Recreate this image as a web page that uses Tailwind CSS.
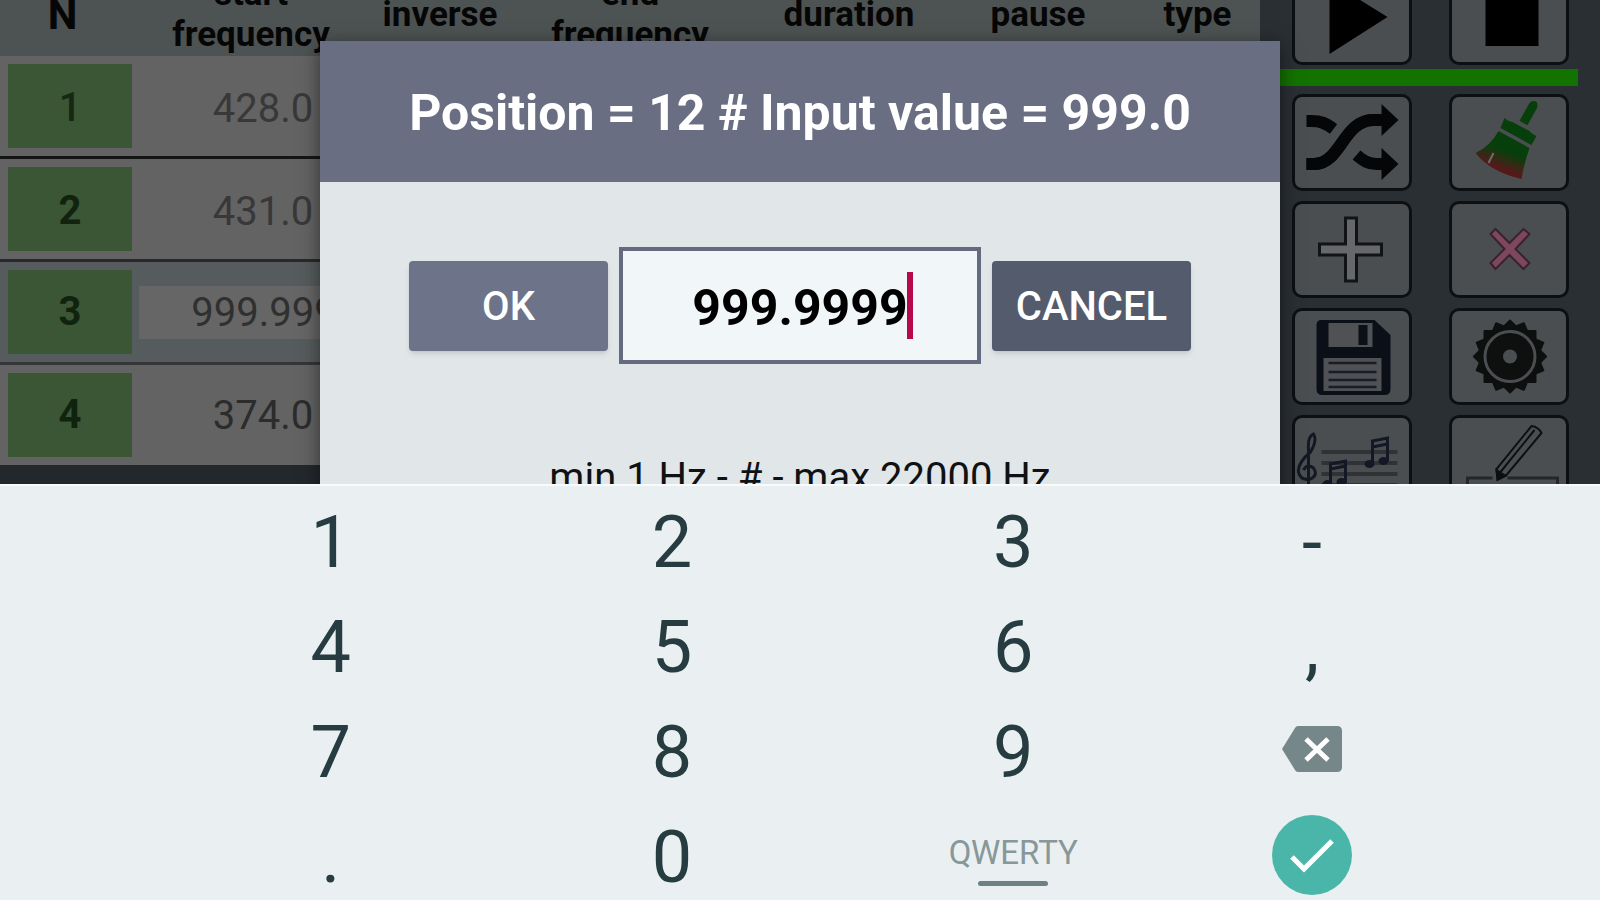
<!DOCTYPE html>
<html lang="en">
<head>
  <meta charset="UTF-8" />
  <meta name="viewport" content="width=device-width, initial-scale=1.0" />
  <script src="https://cdn.jsdelivr.net/npm/@tailwindcss/browser@4"></script>
  <title>Frequency Generator</title>
</head>
<body class="font-[Roboto,sans-serif]">
  <div class="relative flex flex-col h-screen overflow-hidden bg-[#23282c]">

    <!-- Dimmed app screen -->
    <main class="relative flex flex-1 min-h-0 overflow-hidden">
      <div class="flex-1 min-w-0">
        <table class="w-full table-fixed border-collapse -mt-[34px] bg-[#636363]">
          <colgroup>
            <col class="w-[137px]" />
            <col class="w-[228px]" />
            <col class="w-[150px]" />
            <col class="w-[230px]" />
            <col class="w-[208px]" />
            <col class="w-[170px]" />
            <col />
          </colgroup>
          <thead>
            <tr class="h-[90px] bg-[#4d5252] text-[35px] leading-[41px] text-[#060606]">
              <th class="pt-1.5 pb-0 pr-3 text-[42px]">N</th>
              <th class="pt-1.5 pb-0">start<br />frequency</th>
              <th class="pt-1.5 pb-0">inverse</th>
              <th class="pt-1.5 pb-0">end<br />frequency</th>
              <th class="pt-1.5 pb-0">duration</th>
              <th class="pt-1.5 pb-0">pause</th>
              <th class="pt-1.5 pb-0 pl-3">type</th>
            </tr>
          </thead>
          <tbody class="text-[40px] leading-[53px] text-center">
            <tr class="border-b-3 border-[#151516] text-[#383838]">
              <td class="py-2 pl-2 pr-[5px]"><div class="h-[84px] leading-[88px] bg-[#3a5634] font-medium text-[#162814]">1</div></td>
              <td class="pt-1 pl-6">428.0</td>
              <td colspan="5"></td>
            </tr>
            <tr class="border-b-3 border-[#29292b] text-[#383838]">
              <td class="py-2 pl-2 pr-[5px]"><div class="h-[84px] leading-[88px] bg-[#3a5634] font-bold text-[#11220f]">2</div></td>
              <td class="pt-1 pl-6">431.0</td>
              <td colspan="5"></td>
            </tr>
            <tr class="border-b-3 border-[#353637] bg-[#565c5d] text-[#303030]">
              <td class="py-2 pl-2 pr-[5px]"><div class="h-[84px] leading-[84px] bg-[#3a5634] font-bold text-[#11220f]">3</div></td>
              <td class="pl-0.5"><div class="pl-6 bg-[#666666]">999.999</div></td>
              <td colspan="5"></td>
            </tr>
            <tr class="text-[#2c2c2c]">
              <td class="py-2 pl-2 pr-[5px]"><div class="h-[84px] leading-[84px] bg-[#3a5634] font-bold text-[#11220f]">4</div></td>
              <td class="pl-6">374.0</td>
              <td colspan="5"></td>
            </tr>
          </tbody>
        </table>
      </div>

      <!-- Toolbar -->
      <aside class="w-[340px] -mt-8 bg-[#2a2f34]">
        <div class="flex gap-[37px] pl-8">
          <button aria-label="Play" class="w-[120px] h-[97px] border-3 border-[#0d1013] rounded-[10px] bg-[#4b4e50]">
            <svg class="size-full" viewBox="0 0 113 91"><path d="M34 10L92 46L34 83z" /></svg>
          </button>
          <button aria-label="Stop" class="w-[120px] h-[97px] border-3 border-[#0d1013] rounded-[10px] bg-[#4b4e50]">
            <svg class="size-full" viewBox="0 0 113 91"><path d="M33 20h53v55h-53z" /></svg>
          </button>
        </div>
        <div class="h-[17px] mt-1 mb-2 mr-[22px] bg-[#137300]"></div>
        <div class="grid grid-cols-[120px_120px] gap-x-[37px] gap-y-[10px] pl-8">
          <button aria-label="Shuffle" class="h-[97px] border-3 border-[#0d1013] rounded-[10px] bg-[#4b4e50]">
            <svg class="size-full" viewBox="0 0 113 91" fill="none" stroke="#050607" stroke-width="12">
              <path d="M11 24h5c9 0 14 2 22 8M11 67h8C45 67 48 23 78 23h10M61 58c7 6 12 9 20 9h7" />
              <path stroke="none" fill="#050607" d="M86 7L103 23L86 39zM86 51L103 67L86 83z" />
              <path d="M34 43L51 18M49 70L66 46" stroke="#4b4e50" stroke-width="4" />
              <path d="M11 67h8C45 67 48 23 78 23h10" />
            </svg>
          </button>
          <button aria-label="Clear" class="h-[97px] border-3 border-[#0d1013] rounded-[10px] bg-[#4b4e50]">
            <svg class="size-full" viewBox="0 0 113 91">
              <defs>
                <linearGradient id="bristle" x1="0.65" y1="0.2" x2="0.35" y2="0.9">
                  <stop offset="0.3" stop-color="#073f0c" />
                  <stop offset="0.8" stop-color="#56191a" />
                </linearGradient>
              </defs>
              <path d="M81 8L71 26" stroke="#073f0c" stroke-width="9" />
              <circle cx="81" cy="8" r="4" fill="#073f0c" />
              <path d="M52 21q3 3 8 4l17 9q3 4 7 5l-5 9L48 31z" fill="#073f0c" />
              <path d="M46 34L77 51Q72 65 69 82Q38 75 23 56Q38 49 46 34z" fill="url(#bristle)" />
              <path d="M36 66l5-10" stroke="#6c6e6c" stroke-width="2" />
            </svg>
          </button>
          <button aria-label="Add" class="h-[97px] border-3 border-[#0d1013] rounded-[10px] bg-[#4b4e50]">
            <svg class="size-full" viewBox="0 0 113 91">
              <path d="M50 14h11v26h25v11h-25v26h-11v-26h-26v-11h26z" fill="#66686b" stroke="#111317" stroke-width="3" />
            </svg>
          </button>
          <button aria-label="Delete" class="h-[97px] border-3 border-[#0d1013] rounded-[10px] bg-[#4b4e50]">
            <svg class="size-full" viewBox="0 0 113 91">
              <path d="M38 30l5-5l14 14l14-14l6 5l-14 15l14 14l-6 6l-14-14l-14 14l-5-6l14-14z" fill="#7d485d" stroke="#38222d" stroke-width="2" />
            </svg>
          </button>
          <button aria-label="Save" class="h-[97px] border-3 border-[#0d1013] rounded-[10px] bg-[#4b4e50]">
            <svg class="size-full" viewBox="0 0 113 91">
              <path d="M26 9h53l16 15v54q0 6-6 6H27q-6 0-6-6V14q0-5 5-5z" fill="#0b0f18" />
              <path d="M33 12h44v24H33zM28 47h58v33H28z" fill="#4f5155" />
              <path d="M63 14h9v20h-9z" fill="#0b0f18" />
              <path d="M33 52h48M33 61h48M33 69h48M33 76h48" stroke="#191d28" stroke-width="2.5" />
            </svg>
          </button>
          <button aria-label="Settings" class="h-[97px] border-3 border-[#0d1013] rounded-[10px] bg-[#4b4e50]">
            <svg class="size-full" viewBox="0 0 113 91" fill="#0e0f0f" stroke="#0e0f0f" stroke-width="2" stroke-linejoin="round">
              <path d="M32 20h51v51H32z" />
              <path d="M32 20h51v51H32z" transform="rotate(22.5 57.5 45.5)" />
              <path d="M32 20h51v51H32z" transform="rotate(45 57.5 45.5)" />
              <path d="M32 20h51v51H32z" transform="rotate(67.5 57.5 45.5)" />
              <circle cx="57.5" cy="45.5" r="25" fill="none" stroke="#4b4e50" stroke-width="3" />
              <circle cx="57.5" cy="45.5" r="7" fill="#4b4e50" stroke="none" />
            </svg>
          </button>
          <button aria-label="Melody" class="h-[97px] border-3 border-[#0d1013] rounded-[10px] bg-[#4b4e50]">
            <svg class="size-full" viewBox="0 0 113 91" fill="none">
              <path d="M26 34h76M26 45h76M26 56h76M26 67h76" stroke="#303235" stroke-width="4" />
              <path d="M13 75V32q-1-14 5-16q4 6-3 18Q2 45 3 54q2 9 12 7q8-4 3-11q-6-5-10 2" stroke="#141826" stroke-width="3" />
              <path d="M77 45V23l15-3v23M77 29l15-3M35 65V46l15-3v22M35 51l15-3" stroke="#141826" stroke-width="3" />
              <path d="M69 46a5 4 0 1 0 10 0a5 4 0 1 0-10 0zM83 43a5 4 0 1 0 10 0a5 4 0 1 0-10 0zM27 66a5 4 0 1 0 10 0a5 4 0 1 0-10 0zM41 64a5 4 0 1 0 10 0a5 4 0 1 0-10 0z" fill="#141826" />
            </svg>
          </button>
          <button aria-label="Edit" class="h-[97px] border-3 border-[#0d1013] rounded-[10px] bg-[#4b4e50]">
            <svg class="size-full" viewBox="0 0 113 91" fill="none" stroke="#0e0f10" stroke-width="2">
              <path d="M40 60H15v25h90V60H55" stroke="#242628" stroke-width="3" />
              <path d="M79 8q7 1 10 7L54 57l-9 4l-1-10z" fill="#4b4e50" />
              <path d="M82 12L48 54" />
              <path d="M44 52l9 6l-8 4z" fill="#0e0f10" />
            </svg>
          </button>
        </div>
      </aside>

      <!-- Input dialog -->
      <section role="dialog" aria-labelledby="dialogTitle" class="absolute inset-x-1/5 top-[41px] bg-[#e1e6e9] shadow-[0_4px_18px_rgba(0,0,0,0.5)]">
        <h1 id="dialogTitle" class="h-[141px] pt-0.5 leading-[141px] bg-[#696e82] text-center text-[50px] font-bold text-white whitespace-nowrap">Position = 12 # Input value = 999.0</h1>
        <div class="flex items-center justify-center gap-[11px] pt-[65px]">
          <button class="w-[199px] h-[90px] pt-0.5 rounded-[4px] bg-[#6d7489] text-[40px] font-medium text-white shadow-md">OK</button>
          <div class="relative">
            <input type="text" value="999.9999" aria-label="Input value"
              class="block w-[362px] h-[117px] pt-1 border-4 border-[#646a80] bg-[#f1f6f8] text-center text-[50px] font-bold text-black outline-none" />
            <span class="absolute left-[288px] top-[25px] w-[6px] h-[67px] bg-[#b5094c]"></span>
          </div>
          <button class="w-[199px] h-[90px] pt-0.5 rounded-[4px] bg-[#535b6c] text-[40px] font-medium text-white shadow-md">CANCEL</button>
        </div>
        <p class="pt-[90px] pb-16 text-center text-[40px] leading-[47px] text-[#101112]">min 1 Hz - # - max 22000 Hz</p>
      </section>
    </main>

    <!-- Numeric keyboard -->
    <div class="relative grid grid-cols-[4fr_4fr_4fr_3fr] gap-y-[17px] pt-[11px] px-[10%] border-t-2 border-[#f8fbfb] bg-[#eaf0f1] text-[72px] leading-[88px] text-[#263c41]">
      <button class="h-[88px] pt-0.5">1</button>
      <button class="h-[88px] pt-0.5">2</button>
      <button class="h-[88px] pt-0.5">3</button>
      <button class="h-[88px] pt-0.5">-</button>
      <button class="h-[88px] pt-0.5">4</button>
      <button class="h-[88px] pt-0.5">5</button>
      <button class="h-[88px] pt-0.5">6</button>
      <button class="h-[88px] pt-0.5">,</button>
      <button class="h-[88px] pt-0.5">7</button>
      <button class="h-[88px] pt-0.5">8</button>
      <button class="h-[88px] pt-0.5">9</button>
      <button aria-label="Backspace" class="flex items-center justify-center h-[88px] pb-1">
        <svg class="w-[60px] h-[46px]" viewBox="0 0 60 46">
          <path d="M16 0h39q5 0 5 5v36q0 5-5 5H16q-2 0-3-2L0 23L13 2q1-2 3-2z" fill="#76878a" />
          <path d="M24 13L46 34M46 13L24 34" stroke="#fff" stroke-width="5" />
        </svg>
      </button>
      <button class="h-[88px] pt-0.5">.</button>
      <button class="h-[88px] pt-0.5">0</button>
      <button class="flex flex-col items-center gap-2 h-[88px] pt-[21px] text-[33px] leading-[40px] text-[#87979a]">
        QWERTY
        <span class="w-[70px] h-[5px] rounded-full bg-[#6d8084]"></span>
      </button>
      <button aria-label="Done" class="flex items-center justify-center h-[88px] pb-0.5">
        <svg class="size-[80px]" viewBox="0 0 80 80">
          <circle cx="40" cy="40" r="40" fill="#49b6a9" />
          <path d="M20 42L32 54L60 26" fill="none" stroke="#fff" stroke-width="5" />
        </svg>
      </button>
    </div>
  </div>
</body>
</html>
